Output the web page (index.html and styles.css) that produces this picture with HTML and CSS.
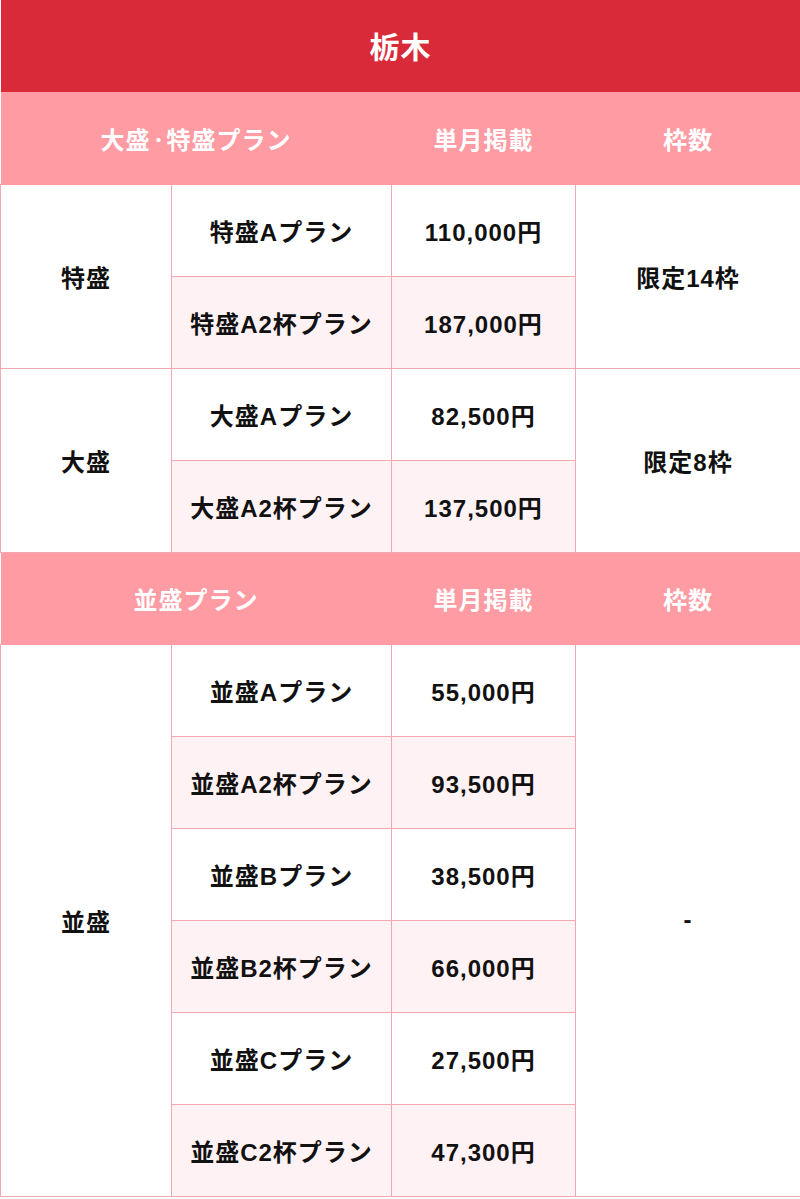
FILE: index.html
```
<!DOCTYPE html>
<html lang="ja">
<head>
<meta charset="utf-8">
<title>栃木</title>
<link rel="stylesheet" href="styles.css">
</head>
<body>
<table class="plan">
  <colgroup>
    <col class="c1"><col class="c2"><col class="c3"><col class="c4">
  </colgroup>
  <thead>
    <tr class="title"><th colspan="4">栃木</th></tr>
  </thead>
  <tbody>
    <tr class="head"><th colspan="2">大盛<span class="dot">・</span>特盛プラン</th><th>単月掲載</th><th>枠数</th></tr>
    <tr><td rowspan="2">特盛</td><td>特盛Aプラン</td><td>110,000円</td><td rowspan="2">限定14枠</td></tr>
    <tr class="alt"><td>特盛A2杯プラン</td><td>187,000円</td></tr>
    <tr><td rowspan="2">大盛</td><td>大盛Aプラン</td><td>82,500円</td><td rowspan="2">限定8枠</td></tr>
    <tr class="alt"><td>大盛A2杯プラン</td><td>137,500円</td></tr>
    <tr class="head"><th colspan="2">並盛プラン</th><th>単月掲載</th><th>枠数</th></tr>
    <tr><td rowspan="6">並盛</td><td>並盛Aプラン</td><td>55,000円</td><td rowspan="6">-</td></tr>
    <tr class="alt"><td>並盛A2杯プラン</td><td>93,500円</td></tr>
    <tr><td>並盛Bプラン</td><td>38,500円</td></tr>
    <tr class="alt"><td>並盛B2杯プラン</td><td>66,000円</td></tr>
    <tr><td>並盛Cプラン</td><td>27,500円</td></tr>
    <tr class="alt"><td>並盛C2杯プラン</td><td>47,300円</td></tr>
  </tbody>
</table>
</body>
</html>
```
FILE: styles.css
```
html, body {
  margin: 0;
  padding: 0;
  background: #ffffff;
}
body {
  font-family: "Liberation Sans", "Noto Sans CJK JP", sans-serif;
  font-weight: bold;
  color: #111111;
}
.plan {
  width: 800px;
  border-collapse: collapse;
  table-layout: fixed;
}
.c1 { width: 171px; }
.c2 { width: 220px; }
.c3 { width: 184px; }
.c4 { width: 225px; }
.plan tr { height: 92px; }
.plan td, .plan th {
  padding: 0;
  text-align: center;
  vertical-align: middle;
  font-size: 24px;
  letter-spacing: 1px;
  font-weight: bold;
  border: 1px solid #f2a8b1;
  background: #ffffff;
}
.plan tr.alt td {
  background: #fff2f4;
}
.plan .title th {
  background: #d92a3a;
  color: #ffffff;
  font-size: 30px;
  padding-bottom: 2px;
  border: none;
}
.plan .head th {
  background: #ff9ba3;
  color: #ffffff;
  border-left: none;
  border-right: none;
  border-color: #ff9ba3;
}
.dot {
  font-size: 16px;
  letter-spacing: 0;
  vertical-align: 3px;
}
```
